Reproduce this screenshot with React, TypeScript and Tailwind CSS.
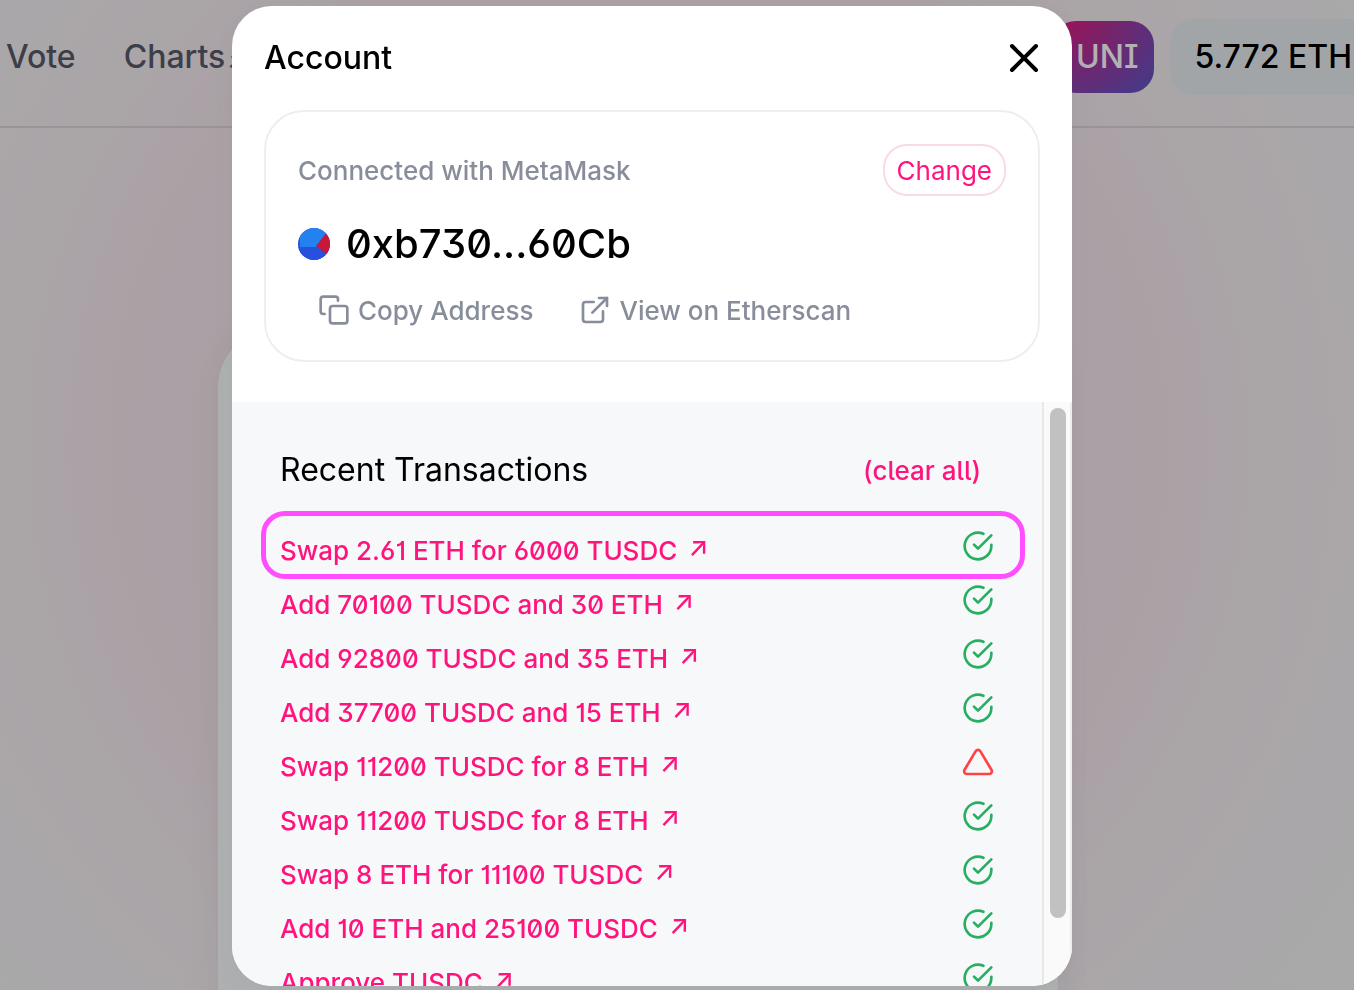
import type { ReactNode } from 'react';
import { FiCheckCircle, FiCopy, FiExternalLink, FiTriangle, FiX } from 'react-icons/fi';

interface Transaction {
  id: number;
  summary: string;
  success: boolean;
  highlighted?: boolean;
}

const transactions: Transaction[] = [
  { id: 1, summary: 'Swap 2.61 ETH for 6000 TUSDC', success: true, highlighted: true },
  { id: 2, summary: 'Add 70100 TUSDC and 30 ETH', success: true },
  { id: 3, summary: 'Add 92800 TUSDC and 35 ETH', success: true },
  { id: 4, summary: 'Add 37700 TUSDC and 15 ETH', success: true },
  { id: 5, summary: 'Swap 11200 TUSDC for 8 ETH', success: false },
  { id: 6, summary: 'Swap 11200 TUSDC for 8 ETH', success: true },
  { id: 7, summary: 'Swap 8 ETH for 11100 TUSDC', success: true },
  { id: 8, summary: 'Add 10 ETH and 25100 TUSDC', success: true },
  { id: 9, summary: 'Approve TUSDC', success: true },
];

/** Round address avatar made of three colour wedges */
const Identicon = () => (
  <svg className="size-8 shrink-0" viewBox="0 0 32 32" aria-hidden="true">
    <defs>
      <clipPath id="avatar">
        <circle cx="16" cy="16" r="16" />
      </clipPath>
    </defs>
    <g clipPath="url(#avatar)">
      <rect width="32" height="32" fill="#2750de" />
      <path d="M2 19 L2 0 H32 V2 L18 19 Z" fill="#2381f0" />
      <path d="M0 19 L18 19 L34 32 H0 Z" fill="#2750de" />
      <path d="M18 18 L29 4 L34 4 V30 Z" fill="#c8183a" />
    </g>
  </svg>
);

const PageHeader = () => (
  <header className="flex h-32 items-center justify-between border-b-2 border-[#dbd4d8] pb-3">
    <nav className="flex gap-12 pl-[6px] text-[32px] font-medium text-[#565a69]">
      <a href="#vote">Vote</a>
      <a href="#charts">
        Charts<span className="ml-[2px] text-[22px]">↗</span>
      </a>
    </nav>
    <div className="flex shrink-0 items-center gap-4 text-[32px] font-medium">
      <button
        type="button"
        className="h-[72px] rounded-3xl bg-[radial-gradient(175%_189%_at_2%_0%,#e5197a_0%,#306adf_100%)] pr-4 pl-6 text-white"
      >
        UNI
      </button>
      <div className="-mr-[10px] flex h-[76px] items-center rounded-l-3xl bg-[#e9edf0] pr-3 pl-6 text-black">
        5.772 ETH
      </div>
    </div>
  </header>
);

const ActionLink = ({ icon, children }: { icon: ReactNode; children: ReactNode }) => (
  <a href="#account" className="flex items-center gap-2 font-medium text-[#888d9b]">
    {icon}
    {children}
  </a>
);

const AccountCard = () => (
  <section className="mx-8 rounded-[40px] border-2 border-[#edeef2] p-8">
    <div className="flex items-center justify-between">
      <span className="font-medium text-[#888d9b]">Connected with MetaMask</span>
      <button
        type="button"
        className="h-[52px] rounded-3xl border-2 border-[#fadae6] px-3 text-[#ff147d]"
      >
        Change
      </button>
    </div>
    <div className="mt-6 flex h-12 items-center gap-4 text-[40px] font-medium">
      <Identicon />
      <p>0xb730...60Cb</p>
    </div>
    <div className="mt-6 flex h-9 items-center gap-[46px] pl-5">
      <ActionLink icon={<FiCopy size={32} />}>Copy Address</ActionLink>
      <ActionLink icon={<FiExternalLink size={32} />}>View on Etherscan</ActionLink>
    </div>
  </section>
);

const TransactionRow = ({ summary, success, highlighted }: Transaction) => (
  <li className="relative flex h-[54px] items-start justify-between pr-12">
    {highlighted && (
      <div className="pointer-events-none absolute -top-4 right-[17px] -left-[19px] h-[68px] rounded-3xl border-[5px] border-[#ff4dff]" />
    )}
    <a href="#transaction" className="mt-1 leading-10 font-medium text-[#ff147d]">
      {summary} <span className="ml-1 align-[4px] leading-none">↗</span>
    </a>
    {success ? (
      <FiCheckCircle size={32} className="mt-[3px] text-[#27ae60]" aria-label="Confirmed" />
    ) : (
      <FiTriangle size={32} className="mt-[3px] text-[#ff4343]" aria-label="Failed" />
    )}
  </li>
);

const RecentTransactions = () => (
  <section className="flex min-h-0 flex-1 bg-[#f7f8fa]">
    <div className="min-w-0 flex-1 overflow-hidden pt-[46px] pl-12">
      <div className="mb-[35px] flex h-11 items-center justify-between pr-[61px]">
        <h2 className="text-[32px]">Recent Transactions</h2>
        <button type="button" className="font-medium text-[#ff147d]">
          (clear all)
        </button>
      </div>
      <ul>
        {transactions.map((tx) => (
          <TransactionRow key={tx.id} {...tx} />
        ))}
      </ul>
    </div>
    {/* Scrollbar track */}
    <div className="w-[30px] shrink-0 border-x-2 border-l-[#e8e8e8] border-r-[#ededed] bg-[#fafafa] px-[6px] pt-[6px]">
      <div className="h-[510px] w-4 rounded-full bg-[#c1c1c1]" />
    </div>
  </section>
);

const AccountModal = () => (
  <div className="fixed inset-0 flex justify-center bg-black/30 pt-[6px] pr-[50px] pb-1">
    <div
      role="dialog"
      aria-labelledby="account-title"
      className="flex w-full max-w-[840px] flex-col overflow-hidden rounded-[40px] bg-white shadow-[0_8px_32px_rgba(47,60,100,0.06)]"
    >
      <div className="flex h-[104px] shrink-0 items-center justify-between pr-6 pl-8">
        <h1 id="account-title" className="text-[32px] font-medium">
          Account
        </h1>
        <button type="button" aria-label="Close">
          <FiX size={48} />
        </button>
      </div>
      <AccountCard />
      <div className="h-10 shrink-0" />
      <RecentTransactions />
    </div>
  </div>
);

const App = () => (
  <div className="h-screen overflow-hidden bg-[radial-gradient(circle_at_638px_448px,#f6e5ec_300px,#f5e7ed_520px,#f4ecf0_620px,#f4eff2_720px,#f2f2f3_850px)] font-['Inter',sans-serif] text-[26px] text-black [font-feature-settings:'ss01'_on,'ss02'_on,'cv01'_on,'cv03'_on]">
    <PageHeader />
    <main className="flex justify-center pt-[200px] pr-[78px]">
      <div className="h-[800px] w-full max-w-[840px] rounded-[60px] bg-[#fafdfd] shadow-[0_0_40px_rgba(0,0,0,0.05)]" />
    </main>
    <AccountModal />
  </div>
);

export default App;
